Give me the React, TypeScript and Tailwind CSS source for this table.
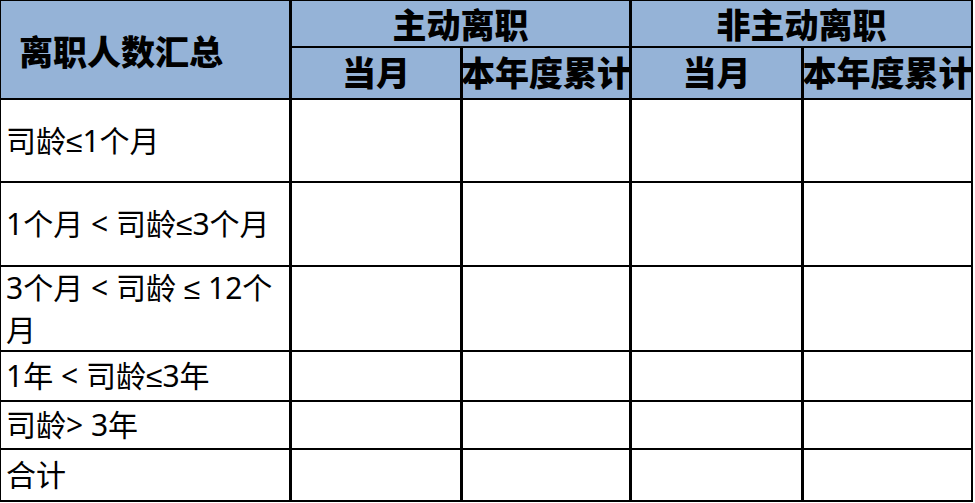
import React from "react";

const head = "bg-[#95b3d7] flex items-center justify-center font-black text-[34px] leading-none text-black whitespace-nowrap overflow-visible";
const label = "bg-white flex items-center pl-[5px] text-[30px] leading-[42px] text-black whitespace-nowrap";
const cell = "bg-white";

const rows: React.ReactNode[] = [
  "司龄≤1个月",
  "1个月 < 司龄≤3个月",
  <>3个月 &lt; 司龄 ≤ 12个<br />月</>,
  "1年 < 司龄≤3年",
  "司龄> 3年",
  "合计",
];

export default function App() {
  return (
    <div className="bg-white w-[975px] h-[503px]" style={{ fontFamily: '"Noto Sans", "Liberation Sans", "Noto Sans CJK SC", sans-serif' }}>
      <div className="grid w-fit bg-black pt-px pl-px pr-[2px] pb-[2px] gap-x-[3px] gap-y-[2px] grid-cols-[288px_168px_166px_169px_167px] grid-rows-[45px_50px_81px_82px_83px_48px_46px_50px]">
        <div className="bg-[#95b3d7] row-span-2 flex items-center pl-[18px] pt-[4px] font-black text-[34px] leading-none text-black">离职人数汇总</div>
        <div className={`${head} col-span-2 pt-[2px]`}>主动离职</div>
        <div className={`${head} col-span-2 pt-[2px]`}>非主动离职</div>
        <div className={head}>当月</div>
        <div className={head}>本年度累计</div>
        <div className={head}>当月</div>
        <div className={head}>本年度累计</div>
        {rows.map((r, i) => (
          <React.Fragment key={i}>
            <div className={label}><div>{r}</div></div>
            <div className={cell} />
            <div className={cell} />
            <div className={cell} />
            <div className={cell} />
          </React.Fragment>
        ))}
      </div>
    </div>
  );
}
